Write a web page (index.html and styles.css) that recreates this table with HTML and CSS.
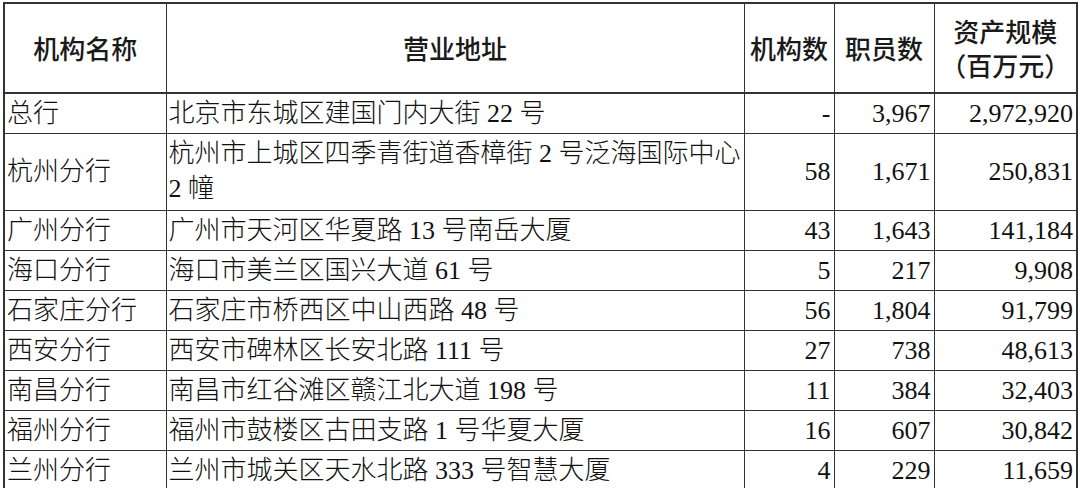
FILE: index.html
```html
<!DOCTYPE html>
<html lang="zh-CN">
<head>
<meta charset="utf-8">
<title>机构列表</title>
<link rel="stylesheet" href="styles.css">
</head>
<body>
<div class="page">
<table class="org-table">
  <colgroup>
    <col class="c-name">
    <col class="c-addr">
    <col class="c-num">
    <col class="c-staff">
    <col class="c-asset">
  </colgroup>
  <thead>
    <tr>
      <th>机构名称</th>
      <th>营业地址</th>
      <th>机构数</th>
      <th>职员数</th>
      <th><span class="hl">资产规模</span><span class="hl">（百万元）</span></th>
    </tr>
  </thead>
  <tbody>
    <tr><td class="name">总行</td><td class="addr">北京市东城区建国门内大街 22 号</td><td class="num">-</td><td class="num">3,967</td><td class="num">2,972,920</td></tr>
    <tr class="tall"><td class="name">杭州分行</td><td class="addr">杭州市上城区四季青街道香樟街 2 号泛海国际中心<br>2 幢</td><td class="num">58</td><td class="num">1,671</td><td class="num">250,831</td></tr>
    <tr><td class="name">广州分行</td><td class="addr">广州市天河区华夏路 13 号南岳大厦</td><td class="num">43</td><td class="num">1,643</td><td class="num">141,184</td></tr>
    <tr><td class="name">海口分行</td><td class="addr">海口市美兰区国兴大道 61 号</td><td class="num">5</td><td class="num">217</td><td class="num">9,908</td></tr>
    <tr><td class="name">石家庄分行</td><td class="addr">石家庄市桥西区中山西路 48 号</td><td class="num">56</td><td class="num">1,804</td><td class="num">91,799</td></tr>
    <tr><td class="name">西安分行</td><td class="addr">西安市碑林区长安北路 111 号</td><td class="num">27</td><td class="num">738</td><td class="num">48,613</td></tr>
    <tr><td class="name">南昌分行</td><td class="addr">南昌市红谷滩区赣江北大道 198 号</td><td class="num">11</td><td class="num">384</td><td class="num">32,403</td></tr>
    <tr><td class="name">福州分行</td><td class="addr">福州市鼓楼区古田支路 1 号华夏大厦</td><td class="num">16</td><td class="num">607</td><td class="num">30,842</td></tr>
    <tr><td class="name">兰州分行</td><td class="addr">兰州市城关区天水北路 333 号智慧大厦</td><td class="num">4</td><td class="num">229</td><td class="num">11,659</td></tr>
    <tr class="more"><td></td><td></td><td></td><td></td><td></td></tr>
  </tbody>
</table>
</div>
</body>
</html>
```
FILE: styles.css
```css
html, body {
  margin: 0;
  padding: 0;
  background: #ffffff;
  overflow: hidden;
}
.page {
  padding: 2px 0 0 3px;
  height: 488px;
  overflow: hidden;
  box-sizing: border-box;
}
.org-table {
  border-collapse: collapse;
  table-layout: fixed;
  width: 1073px;
  font-family: "Liberation Serif", "Noto Sans CJK SC", serif;
  font-size: 26px;
  font-weight: 300;
  color: #111111;
  border-top: 2px solid #333333;
  border-left: 2px solid #333333;
  border-right: 2px solid #333333;
}
.c-name { width: 162px; }
.c-addr { width: 578px; }
.c-num { width: 90px; }
.c-staff { width: 100px; }
.c-asset { width: 143px; }
.org-table th,
.org-table td {
  border: 1px solid #333333;
  padding: 0 4px;
  white-space: nowrap;
  overflow: hidden;
}
.org-table th {
  height: 88px;
  font-family: "Noto Sans CJK SC", sans-serif;
  font-weight: 500;
  font-size: 26px;
  line-height: 34px;
  text-align: center;
  vertical-align: middle;
  color: #1a1a1a;
  padding: 0 2px;
}
.hl {
  display: block;
  height: 34px;
}
.org-table thead tr {
  border-bottom: 2px solid #333333;
}
.org-table td {
  height: 39px;
  line-height: 36px;
  vertical-align: middle;
}
.org-table tr.tall td {
  height: 74px;
}
.org-table tr.tall td.addr {
  vertical-align: top;
  line-height: 35px;
  padding-top: 2px;
}
.org-table td.name,
.org-table td.addr {
  text-align: left;
  padding-left: 2px;
}
.org-table td.num {
  text-align: right;
  padding-right: 3px;
}
.org-table tr.more td {
  border-top: 2px solid #333333;
  height: 20px;
}
```
